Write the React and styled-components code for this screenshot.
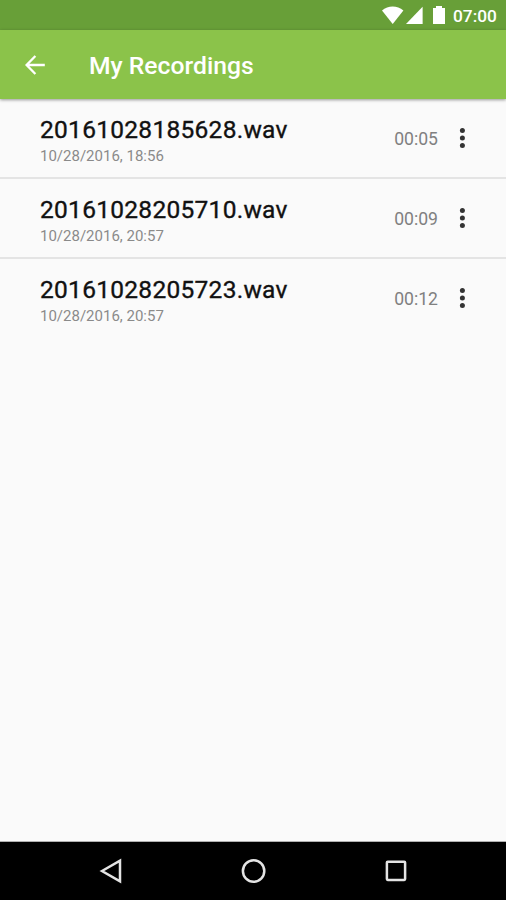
import styled, { createGlobalStyle } from "styled-components";

const recordings = [
	{ name: "20161028185628.wav", date: "10/28/2016, 18:56", duration: "00:05" },
	{ name: "20161028205710.wav", date: "10/28/2016, 20:57", duration: "00:09" },
	{ name: "20161028205723.wav", date: "10/28/2016, 20:57", duration: "00:12" },
];

function App() {
	return (
		<Page>
			<GlobalStyle />
			<StatusBar>
				<svg width="60" height="19" viewBox="0 0 60 19" fill="#fff">
					<path d="M0 4.6C6.2-0.9 15.2-0.9 21.4 4.6L10.7 18Z" />
					<path d="M40.6 0.8V18H24Z" />
				</svg>
				<BatteryIcon />
				<Clock>07:00</Clock>
			</StatusBar>
			<TopBar>
				<BackButton aria-label="Back">
					<svg width="22" height="22" viewBox="0 0 22 22" fill="none">
						<path
							d="M20.8 11H3M11.4 2L2.6 11L11.4 20"
							stroke="#fff"
							strokeWidth="2.3"
						/>
					</svg>
				</BackButton>
				<Title>My Recordings</Title>
			</TopBar>
			<List>
				{recordings.map((recording) => (
					<Recording key={recording.name} {...recording} />
				))}
			</List>
			<NavBar>
				<svg width="24" height="26" viewBox="0 0 24 26">
					<path d="M4 13L22 2.6V23.4Z" />
				</svg>
				<svg width="26" height="26" viewBox="0 0 26 26">
					<circle cx="13.6" cy="13" r="10.7" />
				</svg>
				<svg width="24" height="26" viewBox="0 0 24 26">
					<rect x="2.9" y="3.7" width="18.2" height="18.2" rx="0.8" />
				</svg>
			</NavBar>
		</Page>
	);
}

function Recording({ name, date, duration }) {
	return (
		<Row>
			<Info>
				<Name>{name}</Name>
				<RecordedAt>{date}</RecordedAt>
			</Info>
			<Duration>{duration}</Duration>
			<MenuButton aria-label="Options">
				<svg width="8" height="24" viewBox="0 0 8 24" fill="#333">
					<circle cx="4.4" cy="4.6" r="2.5" />
					<circle cx="4.4" cy="12" r="2.5" />
					<circle cx="4.4" cy="19.4" r="2.5" />
				</svg>
			</MenuButton>
		</Row>
	);
}

export default App;

const GlobalStyle = createGlobalStyle`
	* {
		box-sizing: border-box;
	}

	body {
		margin: 0;
		font-family: Roboto, sans-serif;
		background-color: #fafafa;
	}

	button {
		padding: 0;
		border: none;
		background: none;
		display: flex;
	}
`;

const Page = styled.div`
	width: 100%;
	height: 100vh;
	overflow: hidden;

	display: flex;
	flex-direction: column;
`;

const StatusBar = styled.div`
	height: 30px;
	flex-shrink: 0;
	padding: 6px 9px 0 0;
	background-color: #689f38;

	display: flex;
	justify-content: flex-end;
	align-items: flex-start;
`;

const BatteryIcon = styled.div`
	width: 12px;
	height: 18px;
	margin-right: 8px;
	margin-left: -9px;
	background-color: #fff;
	clip-path: polygon(
		0 2px,
		3px 2px,
		3px 0,
		9px 0,
		9px 2px,
		100% 2px,
		100% 100%,
		0 100%
	);
`;

const Clock = styled.span`
	width: 44px;
	font-weight: 500;
	font-size: 17.3px;
	line-height: 20px;
	color: #fff;
`;

const TopBar = styled.header`
	height: 69px;
	flex-shrink: 0;
	padding-left: 24px;
	background-color: #8bc34a;
	box-shadow: 0 1px 3px rgba(0, 0, 0, 0.4);
	z-index: 1;

	display: flex;
	align-items: center;
`;

const BackButton = styled.button`
	margin-right: 43px;
`;

const Title = styled.h1`
	margin: 2px 0 0;
	font-weight: 500;
	font-size: 24.7px;
	line-height: 28px;
	color: #fff;
`;

const List = styled.ul`
	margin: 0;
	padding: 0;
	flex: 1;
	list-style: none;
`;

const Row = styled.li`
	height: 80px;
	padding: 0 40px;
	border-bottom: 2px solid #e4e4e4;

	display: flex;
	align-items: center;

	&:last-child {
		border-bottom-color: transparent;
	}
`;

const Info = styled.div`
	flex: 1;
	padding-top: 5px;
`;

const Name = styled.div`
	font-size: 24.5px;
	line-height: 28px;
	letter-spacing: 0.28px;
	color: #111;
	-webkit-text-stroke: 0.35px #111;
`;

const RecordedAt = styled.div`
	margin-top: 2px;
	font-size: 15px;
	line-height: 20px;
	color: #8a8a8a;
`;

const Duration = styled.span`
	margin-top: 2px;
	margin-right: 20px;
	font-size: 17.6px;
	line-height: 20px;
	color: #808080;
`;

const MenuButton = styled.button`
	width: 8px;
`;

const NavBar = styled.nav`
	height: 59px;
	flex-shrink: 0;
	padding: 0 98px;
	border-top: 1px solid #b0b0b0;
	background-color: #000;

	display: flex;
	justify-content: space-between;
	align-items: center;

	svg {
		fill: none;
		stroke: #e4e4e4;
		stroke-width: 2.5;
	}
`;
